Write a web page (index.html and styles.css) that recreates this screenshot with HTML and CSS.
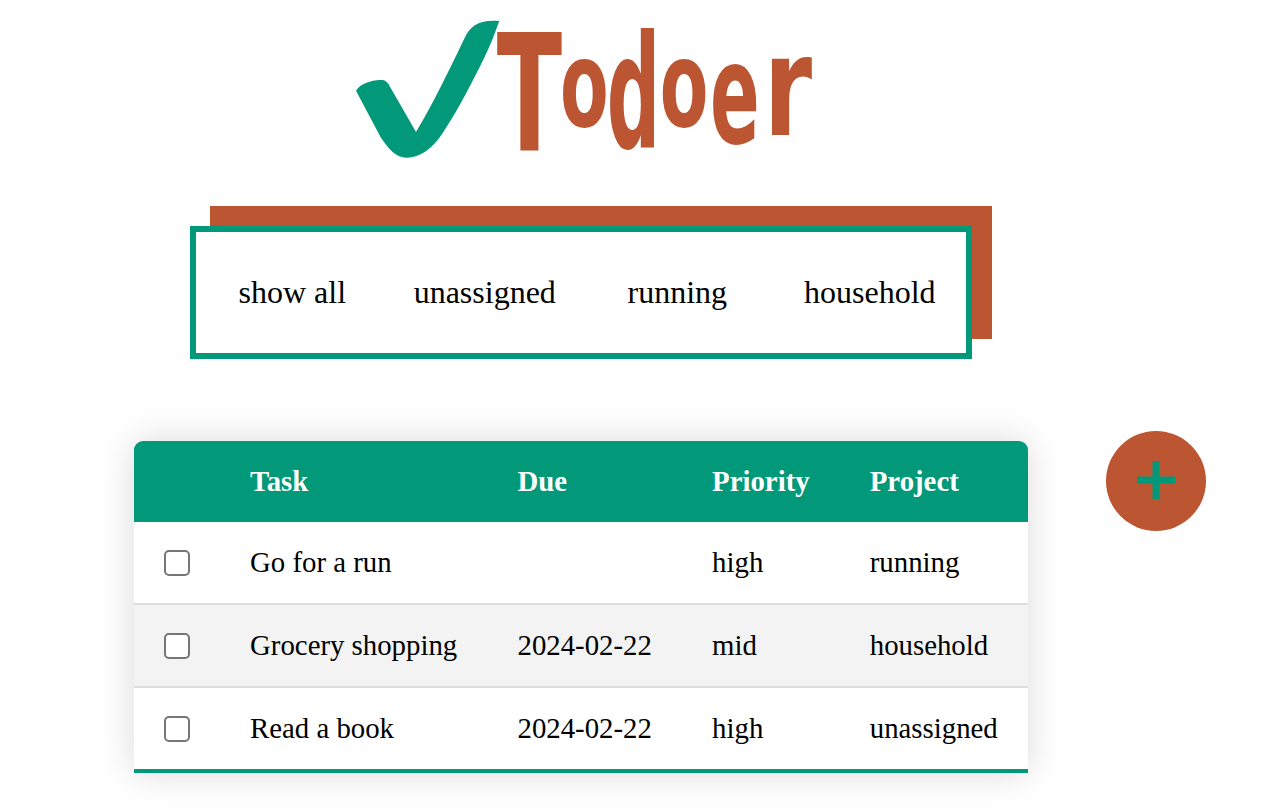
FILE: index.html
```html
<!DOCTYPE html>
<html lang="en">
<head>
    <meta charset="UTF-8">
    <meta name="viewport" content="width=device-width, initial-scale=1.0">
    <title>Todoer</title>
    <link rel="stylesheet" href="styles.css">
</head>
<body>
    <div class="container">
        <svg class="logo" viewBox="0 0 1470 510" role="img" aria-label="Todoer">
            <path class="logo-check" d="M48 272 C60 250 105 236 132 241 C140 243 146 252 150 260 L228 396 C280 310 330 205 372 118 C390 78 415 58 478 63 C466 95 452 135 432 175 C397 245 357 325 317 385 C288 435 250 472 200 473 C168 473 148 450 122 412 Z"/>
            <g transform="scale(0.59 1)">
                <text class="logo-word"><tspan x="797" y="450" font-size="487">T</tspan><tspan x="1119" y="378" font-size="360">o</tspan><tspan x="1357" y="442" font-size="470" textLength="272" lengthAdjust="spacingAndGlyphs">d</tspan><tspan x="1626" y="378" font-size="360">o</tspan><tspan x="1882" y="430" font-size="420" textLength="253" lengthAdjust="spacingAndGlyphs">e</tspan><tspan x="2155" y="405" font-size="415" textLength="246" lengthAdjust="spacingAndGlyphs">r</tspan></text>
            </g>
        </svg>

        <nav class="filters">
            <a href="#">show all</a>
            <a href="#">unassigned</a>
            <a href="#">running</a>
            <a href="#">household</a>
        </nav>

        <div class="board">
            <div class="tasks-card">
                <table class="tasks">
                    <thead>
                        <tr>
                            <th></th>
                            <th>Task</th>
                            <th>Due</th>
                            <th>Priority</th>
                            <th>Project</th>
                        </tr>
                    </thead>
                    <tbody>
                        <tr>
                            <td><input type="checkbox"></td>
                            <td>Go for a run</td>
                            <td></td>
                            <td>high</td>
                            <td>running</td>
                        </tr>
                        <tr>
                            <td><input type="checkbox"></td>
                            <td>Grocery shopping</td>
                            <td>2024-02-22</td>
                            <td>mid</td>
                            <td>household</td>
                        </tr>
                        <tr>
                            <td><input type="checkbox"></td>
                            <td>Read a book</td>
                            <td>2024-02-22</td>
                            <td>high</td>
                            <td>unassigned</td>
                        </tr>
                    </tbody>
                </table>
            </div>

            <button class="add-btn" type="button" aria-label="Add task">
                <svg width="38" height="38" viewBox="0 0 38 38">
                    <path d="M15.500 0h7v15.500h15.500v7h-15.500v15.500h-7v-15.500h-15.500v-7h15.500z"/>
                </svg>
            </button>
        </div>
    </div>
</body>
</html>
```

FILE: styles.css
```css
body {
    font-family: "Liberation Serif", "Times New Roman", serif;
    background-color: #ffffff;
    margin: 0;
    color: #000;
}
.container {
    padding: 0 0 35px 134px;
}
.logo {
    display: block;
    width: 490px;
    height: 170px;
    margin-left: 206px;
    overflow: visible;
}
.logo-check {
    fill: #019979;
}
.logo-word {
    fill: #bc5532;
    font-family: "DejaVu Sans", sans-serif;
    font-weight: bold;
}
.filters {
    display: grid;
    grid-template-columns: repeat(4, 1fr);
    align-items: center;
    box-sizing: border-box;
    width: 782px;
    height: 133px;
    margin: 56px 0 82px 56px;
    border: 6px solid #019979;
    box-shadow: 20px -20px 0 #bc5532;
    background-color: #ffffff;
}
.filters a {
    color: #000;
    font-size: 32px;
    text-align: center;
    text-decoration: none;
}
.board {
    display: flex;
    align-items: flex-start;
    gap: 78px;
}
.tasks-card {
    width: 894px;
    border-radius: 9px 9px 0 0;
    overflow: hidden;
    box-shadow: 0 0 36px rgba(0, 0, 0, 0.15);
}
.tasks {
    width: 100%;
    border-collapse: separate;
    border-spacing: 0;
    font-size: 28.8px;
}
.tasks thead tr {
    background-color: #019979;
    color: #ffffff;
    text-align: left;
}
.tasks th,
.tasks td {
    padding: 24px 30px;
}
.tasks td {
    border-bottom: 2px solid #dddddd;
}
.tasks tbody tr:nth-of-type(even) {
    background-color: #f3f3f3;
}
.tasks tbody tr:last-of-type td {
    border-bottom: 4px solid #019979;
}
.tasks input[type="checkbox"] {
    appearance: none;
    display: block;
    box-sizing: border-box;
    width: 26px;
    height: 26px;
    margin: 0;
    border: 2px solid #767676;
    border-radius: 5px;
    background-color: #ffffff;
}
.add-btn {
    display: flex;
    align-items: center;
    justify-content: center;
    width: 100px;
    height: 100px;
    margin-top: -10px;
    padding: 0 0 3px;
    border: none;
    border-radius: 50%;
    background-color: #bc5532;
    cursor: pointer;
}
.add-btn svg {
    fill: #019979;
}
```
